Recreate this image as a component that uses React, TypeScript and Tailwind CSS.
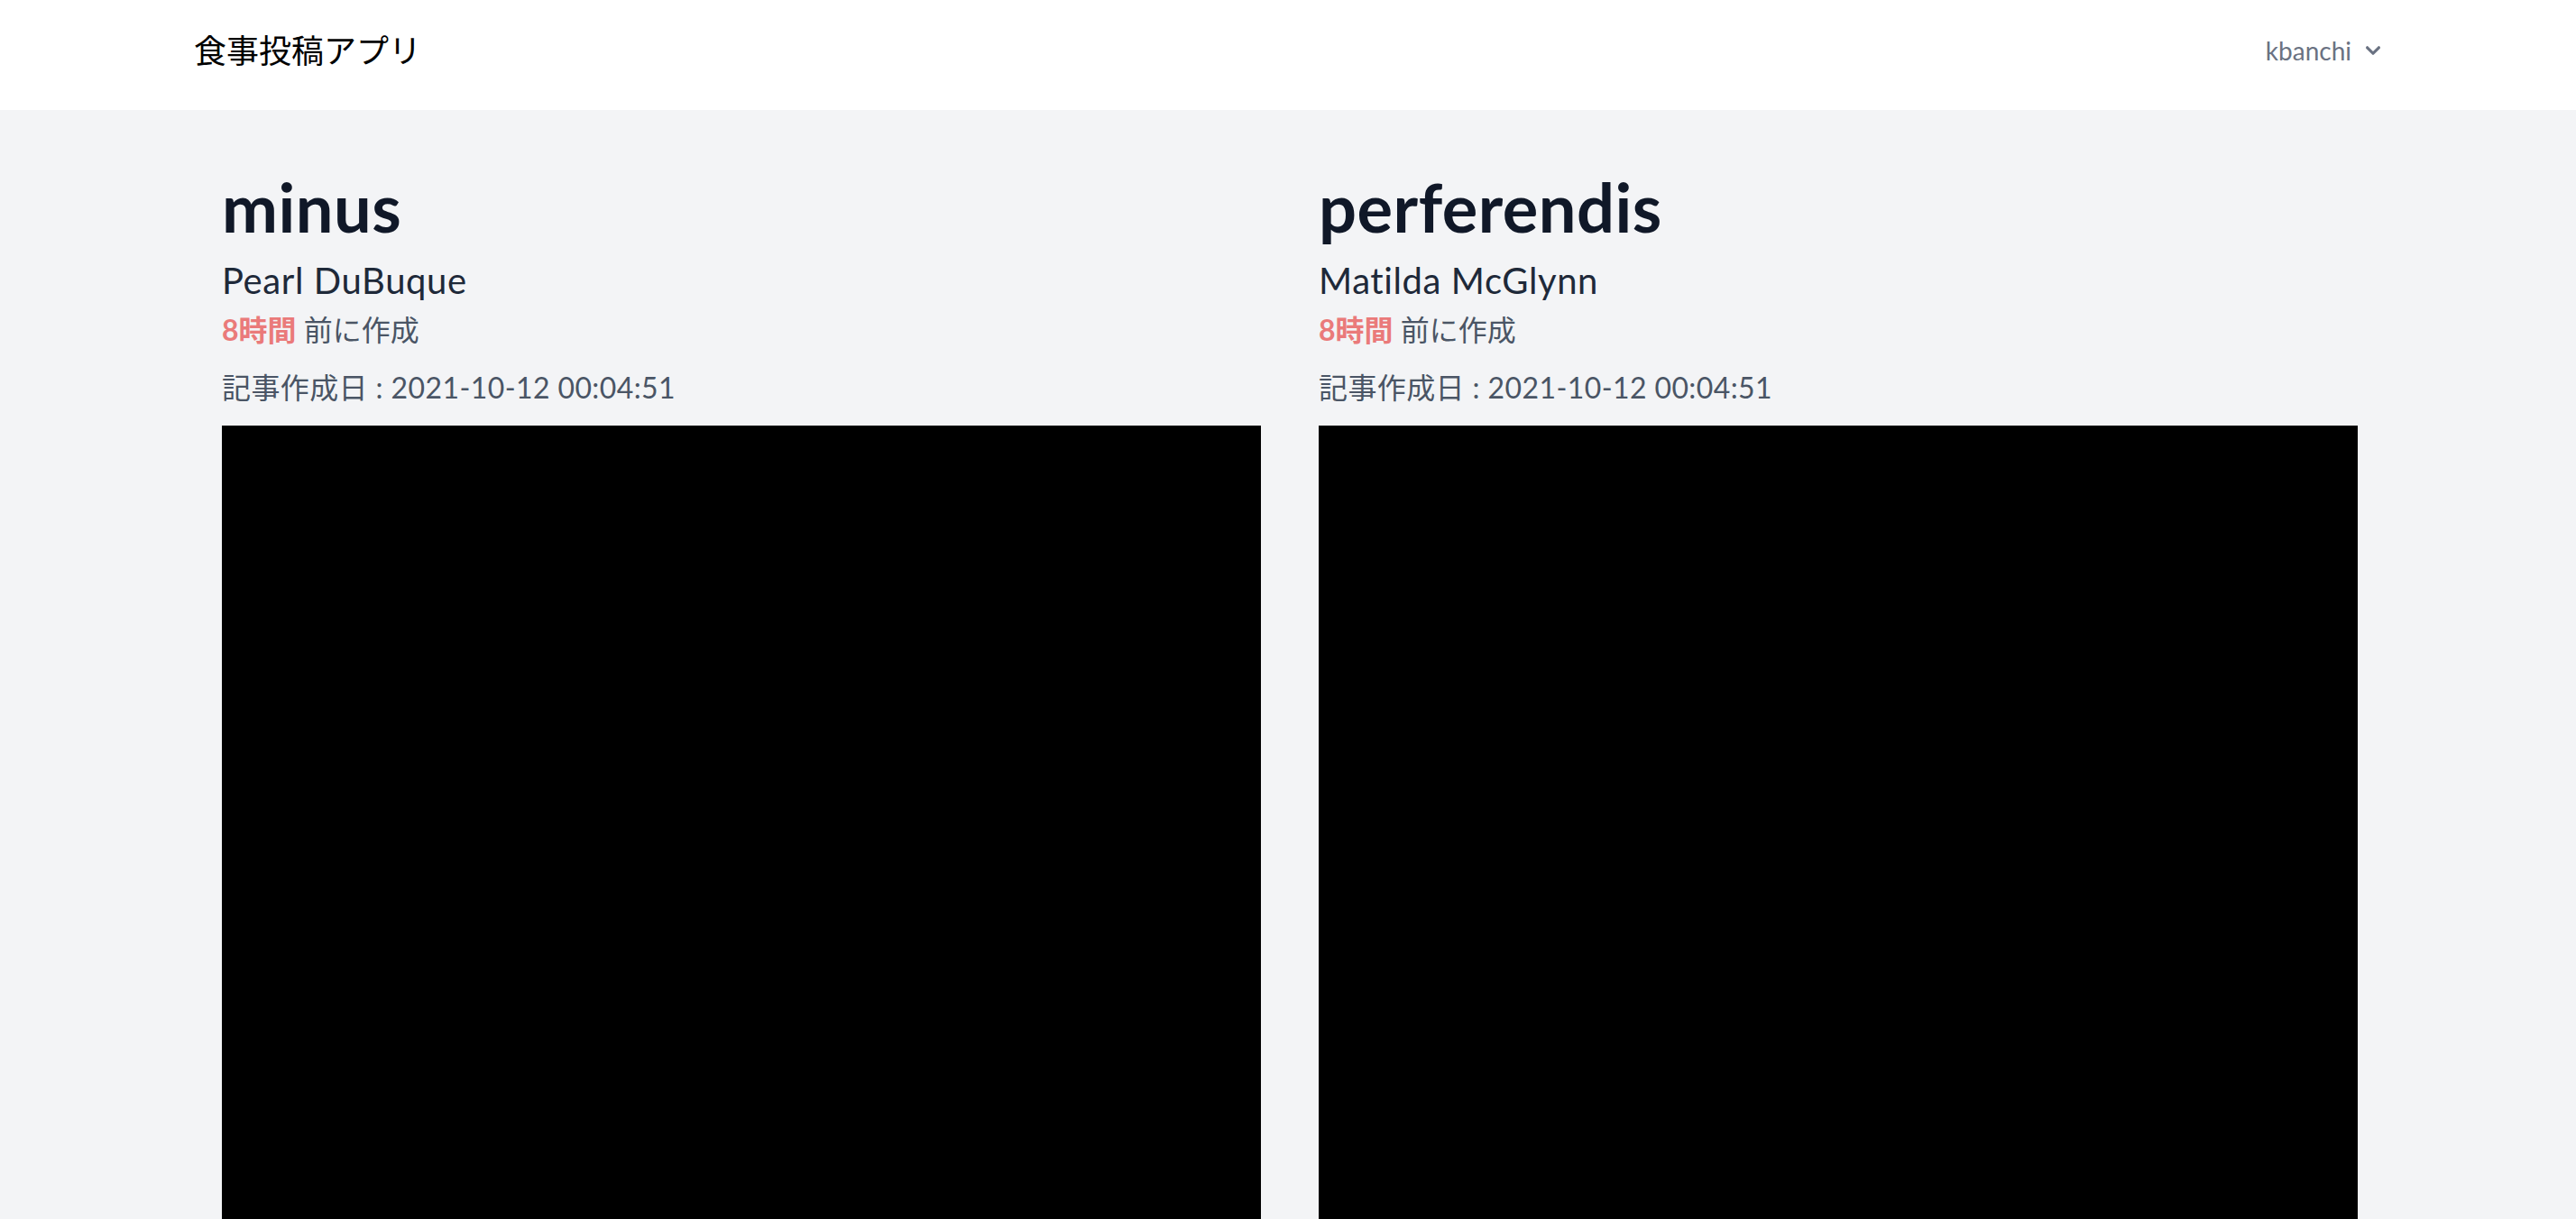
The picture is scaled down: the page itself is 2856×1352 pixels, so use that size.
const posts = [
  { title: 'minus', author: 'Pearl DuBuque', ago: '8時間', createdAt: '2021-10-12 00:04:51' },
  { title: 'perferendis', author: 'Matilda McGlynn', ago: '8時間', createdAt: '2021-10-12 00:04:51' },
]

const font = "font-['Lato','Noto_Sans_CJK_JP',sans-serif]"

export default function App() {
  return (
    <div className={`h-screen overflow-hidden bg-gray-100 ${font}`}>
      {/* Navigation */}
      <nav className="bg-white">
        <div className="flex h-[122px] items-center justify-between pb-[10px] pl-[215px] pr-[209px]">
          <span className="text-[36px] leading-[56px] text-black">食事投稿アプリ</span>
          <button className="flex items-center text-[28px] leading-[40px] text-gray-500">
            kbanchi
            <svg className="ml-2 h-8 w-8 fill-current" viewBox="0 0 20 20">
              <path
                fillRule="evenodd"
                d="M5.293 7.293a1 1 0 011.414 0L10 10.586l3.293-3.293a1 1 0 111.414 1.414l-4 4a1 1 0 01-1.414 0l-4-4a1 1 0 010-1.414z"
                clipRule="evenodd"
              />
            </svg>
          </button>
        </div>
      </nav>

      {/* Posts */}
      <div className="ml-[246px] grid w-[2368px] grid-cols-2 gap-x-16 pt-[68px]">
        {posts.map(post => (
          <article key={post.title} className="flex flex-col">
            <h1 className="text-[74px] font-bold leading-[80px] tracking-[0.5px] text-gray-900">{post.title}</h1>
            <p className="mt-[13px] text-[40px] leading-[56px] tracking-[0.6px] text-gray-800">{post.author}</p>
            <p className="mt-[3px] text-[32px] leading-[48px] text-gray-600">
              <span className="font-bold text-[#ea7a7a]">{post.ago}</span> 前に作成
            </p>
            <p className="mt-4 text-[32px] leading-[48px] tracking-[0.4px] text-gray-600">
              記事作成日 : {post.createdAt}
            </p>
            <div className="mt-[18px] aspect-square w-full bg-black" />
          </article>
        ))}
      </div>
    </div>
  )
}
